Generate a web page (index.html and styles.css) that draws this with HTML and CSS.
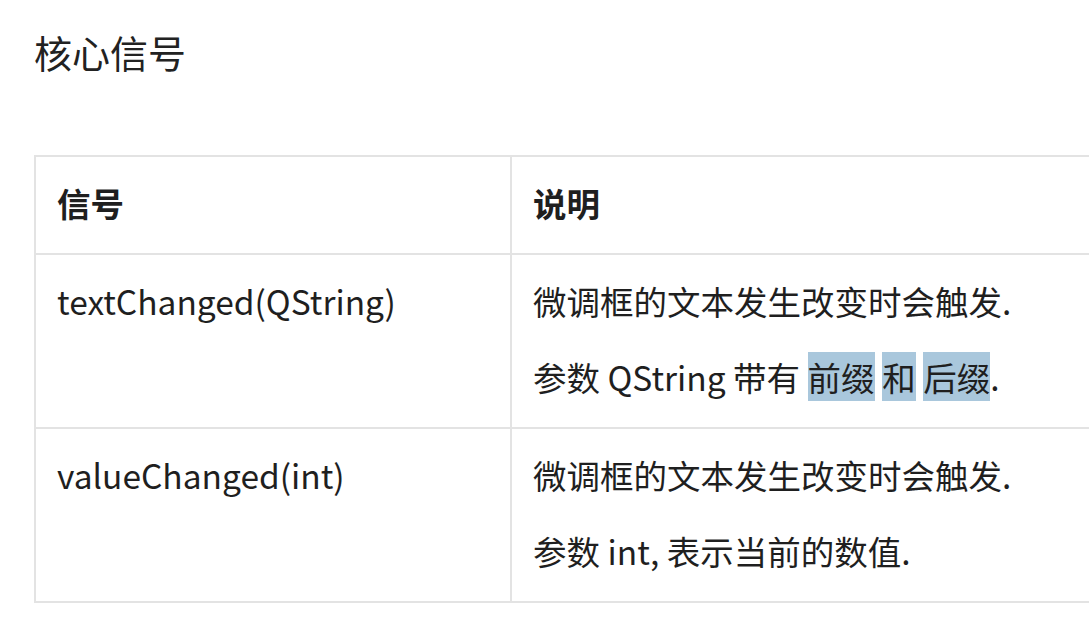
FILE: index.html
```html
<!DOCTYPE html>
<html lang="zh-CN">
<head>
<meta charset="utf-8">
<title>核心信号</title>
<link rel="stylesheet" href="styles.css">
</head>
<body>
<main class="page">
  <h1 class="title">核心信号</h1>
  <table class="signals">
    <thead>
      <tr><th class="col-signal">信号</th><th class="col-desc">说明</th></tr>
    </thead>
    <tbody>
      <tr>
        <td>textChanged(QString)</td>
        <td>
          <p>微调框的文本发生改变时会触发.</p>
          <p>参数 QString 带有 <mark>前缀</mark> <mark>和</mark> <mark>后缀</mark>.</p>
        </td>
      </tr>
      <tr>
        <td>valueChanged(int)</td>
        <td>
          <p>微调框的文本发生改变时会触发.</p>
          <p>参数 int, 表示当前的数值.</p>
        </td>
      </tr>
    </tbody>
  </table>
</main>
</body>
</html>
```

FILE: styles.css
```css
html, body {
  margin: 0;
  padding: 0;
  background: #ffffff;
  overflow: hidden;
}

.page {
  padding: 0 0 0 34px;
  font-family: "Noto Sans CJK SC", "Noto Sans", sans-serif;
  color: #1f1f1f;
}

.title {
  margin: 0;
  padding-top: 25px;
  font-size: 38px;
  font-weight: 400;
  line-height: 54px;
  color: #222222;
}

.signals {
  margin-top: 76px;
  width: 1100px;
  border-collapse: collapse;
  font-size: 33.5px;
  line-height: 48px;
}

.signals th,
.signals td {
  border: 2px solid #e3e3e3;
  padding: 22px 21px 26px;
  text-align: left;
  vertical-align: top;
}

.signals th {
  font-weight: 700;
}

.col-signal {
  width: 432px;
}

.signals p {
  margin: 0;
}

.signals p + p {
  margin-top: 28px;
}

.signals mark {
  background: #a9c7dc;
  color: #1f1f1f;
}
```
